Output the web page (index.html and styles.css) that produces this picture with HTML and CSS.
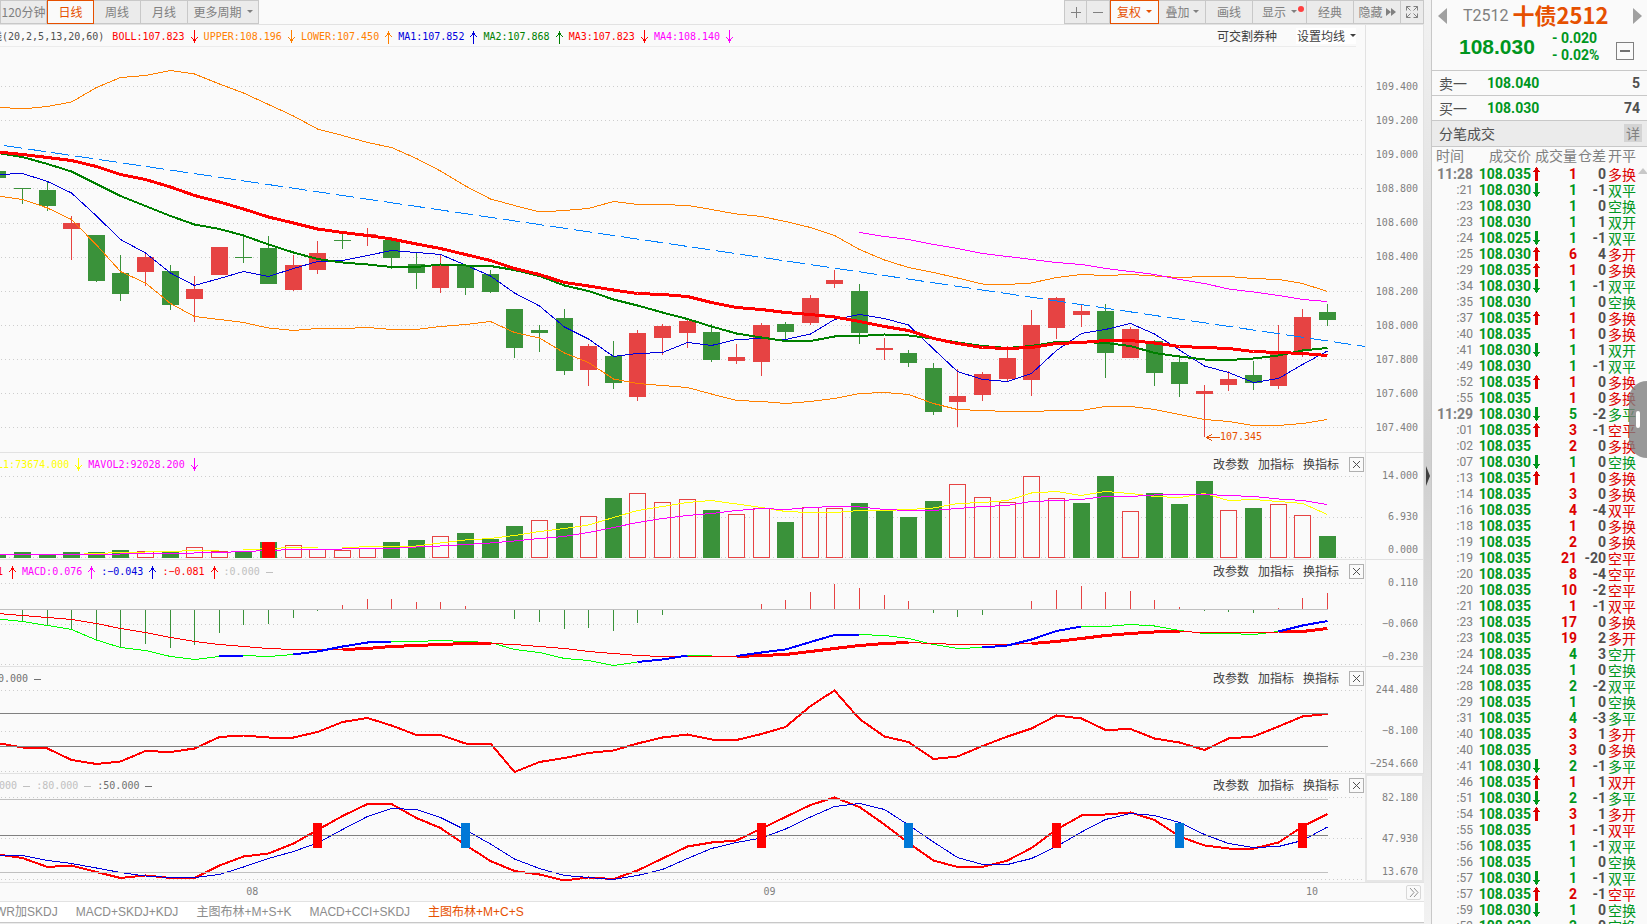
FILE: index.html
```html
<!DOCTYPE html>
<html lang="zh-CN">
<head>
<meta charset="utf-8">
<title>十债2512 日线</title>
<link rel="stylesheet" href="styles.css">
</head>
<body>
<svg class="symbols" aria-hidden="true">
  <symbol id="up" viewBox="0 0 9 14"><path d="M4 1h1v13H4zM3 3h3v2H3zM2 5h1v1H2zM6 5h1v1H6zM1 6h1v1H1zM7 6h1v1H7z" fill="currentColor"/></symbol>
  <symbol id="down" viewBox="0 0 9 14"><path d="M4 0h1v13H4zM3 9h3v2H3zM2 8h1v1H2zM6 8h1v1H6zM1 7h1v1H1zM7 7h1v1H7z" fill="currentColor"/></symbol>
  <symbol id="flat" viewBox="0 0 9 14"><path d="M1 7h7v1H1z" fill="currentColor"/></symbol>
  <symbol id="bold-up" viewBox="0 0 8 14"><path d="M2 14V5H0V4h1V3h1V1h1V0h1v1h1v2h1v1h1v1H5v9z" fill="currentColor"/></symbol>
  <symbol id="bold-down" viewBox="0 0 8 14"><path d="M2 0v9H0v1h1v1h1v2h1v1h1v-1h1v-2h1v-1h1V9H5V0z" fill="currentColor"/></symbol>
  <symbol id="close" viewBox="0 0 15 15"><rect x=".5" y=".5" width="14" height="14" rx="1" fill="none" stroke="#b0b0b0"/><path d="M4 4l7 7M11 4l-7 7" stroke="#505050" fill="none"/></symbol>
</svg>
<div class="app">
  <main class="charts">
    <nav class="toolbar">
      <div class="group">
        <button class="btn first">120分钟</button><button class="btn active period">日线</button><button class="btn period">周线</button><button class="btn period">月线</button><button class="btn more">更多周期<i class="caret"></i></button>
      </div>
      <div class="group">
        <button class="btn small" aria-label="放大"><svg width="12" height="12"><path d="M1 6.5h10M6.5 1v11" stroke="#808080"/></svg></button><button class="btn small" aria-label="缩小"><svg width="12" height="12"><path d="M1 6.5h10" stroke="#808080"/></svg></button><button class="btn active adjust">复权<i class="caret"></i></button><button class="btn tool">叠加<i class="caret"></i></button><button class="btn tool">画线</button><button class="btn show">显示<i class="caret"></i><b class="dot"></b></button><button class="btn tool">经典</button><button class="btn tool">隐藏<svg width="10" height="8"><path d="M0 0l5 4-5 4zM5 0l5 4-5 4z" fill="#808080"/></svg></button><button class="btn small" aria-label="全屏"><svg width="14" height="14" fill="none" stroke="#808080"><path d="M1.500 5.500v-4h4M1.500 1.500l4 4M8.500 1.500h4v4M12.500 1.500l-4 4M1.500 8.500v4h4M1.500 12.500l4-4M12.500 8.500v4h-4M12.500 12.500l-4-4"/></svg></button>
      </div>
    </nav>

    <section class="pane main-pane">
      <div class="plot">
        <header class="legend main-legend">
          <div class="values lead-main">
            <span class="name">线(20,2,5,13,20,60)</span>
            <span class="red">BOLL:107.823<svg><use href="#down"/></svg></span><span class="orange">UPPER:108.196<svg><use href="#down"/></svg></span><span class="orange">LOWER:107.450<svg><use href="#up"/></svg></span><span class="blue">MA1:107.852<svg><use href="#up"/></svg></span><span class="green">MA2:107.868<svg><use href="#up"/></svg></span><span class="red">MA3:107.823<svg><use href="#down"/></svg></span><span class="magenta">MA4:108.140<svg><use href="#down"/></svg></span>
          </div>
          <div class="actions"><button class="link">可交割券种</button><button class="link averages">设置均线<i class="caret"></i></button></div>
        </header>
        <svg class="canvas" id="price" viewBox="0 47 1365 405" preserveAspectRatio="none"></svg>
      </div>
      <div class="axis"><span>109.400</span><span>109.200</span><span>109.000</span><span>108.800</span><span>108.600</span><span>108.400</span><span>108.200</span><span>108.000</span><span>107.800</span><span>107.600</span><span>107.400</span></div>
    </section>

    <section class="pane sub">
      <div class="plot">
        <svg class="canvas" id="volume" viewBox="0 453 1365 106" preserveAspectRatio="none"></svg>
        <header class="legend">
          <div class="values lead-volume"><span class="yellow">MAVOL1:73674.000<svg><use href="#down"/></svg></span><span class="magenta">MAVOL2:92028.200<svg><use href="#down"/></svg></span></div>
          <div class="actions"><button class="link">改参数</button><button class="link">加指标</button><button class="link">换指标</button><button class="close" aria-label="关闭"><svg><use href="#close"/></svg></button></div>
        </header>
      </div>
      <div class="axis"><span>14.000</span><span>6.930</span><span>0.000</span></div>
    </section>

    <section class="pane sub">
      <div class="plot">
        <svg class="canvas" id="macd" viewBox="0 560 1365 106" preserveAspectRatio="none"></svg>
        <header class="legend">
          <div class="values lead-macd"><span class="red">1<svg><use href="#up"/></svg></span><span class="magenta">MACD:0.076<svg><use href="#up"/></svg></span><span class="blue">:−0.043<svg><use href="#up"/></svg></span><span class="red">:−0.081<svg><use href="#up"/></svg></span><span class="silver">:0.000<svg><use href="#flat"/></svg></span></div>
          <div class="actions"><button class="link">改参数</button><button class="link">加指标</button><button class="link">换指标</button><button class="close" aria-label="关闭"><svg><use href="#close"/></svg></button></div>
        </header>
      </div>
      <div class="axis"><span>0.110</span><span>−0.060</span><span>−0.230</span></div>
    </section>

    <section class="pane sub">
      <div class="plot">
        <svg class="canvas" id="cci" viewBox="0 667 1365 106" preserveAspectRatio="none"></svg>
        <header class="legend">
          <div class="values lead-cci"><span class="gray">0.000<svg><use href="#flat"/></svg></span></div>
          <div class="actions"><button class="link">改参数</button><button class="link">加指标</button><button class="link">换指标</button><button class="close" aria-label="关闭"><svg><use href="#close"/></svg></button></div>
        </header>
      </div>
      <div class="axis"><span>244.480</span><span>−8.100</span><span>−254.660</span></div>
    </section>

    <section class="pane sub last">
      <div class="plot">
        <svg class="canvas" id="skdj" viewBox="0 774 1365 108" preserveAspectRatio="none"></svg>
        <header class="legend">
          <div class="values lead-skdj"><span class="silver">:20.000<svg><use href="#flat"/></svg></span><span class="silver">:80.000<svg><use href="#flat"/></svg></span><span class="gray">:50.000<svg><use href="#flat"/></svg></span></div>
          <div class="actions"><button class="link">改参数</button><button class="link">加指标</button><button class="link">换指标</button><button class="close" aria-label="关闭"><svg><use href="#close"/></svg></button></div>
        </header>
      </div>
      <div class="axis selected"><span>82.180</span><span>47.930</span><span>13.670</span></div>
    </section>

    <div class="months">
      <span class="month-8">08</span><span class="month-9">09</span><span class="month-10">10</span>
      <button class="forward" aria-label="向后"><svg width="10" height="9" fill="none" stroke="#909090"><path d="M1 0l4 4.500-4 4.500M5 0l4 4.500-4 4.500"/></svg></button>
    </div>

    <nav class="templates">
      <a href="#t1">WR加SKDJ</a><a href="#t2">MACD+SKDJ+KDJ</a><a href="#t3">主图布林+M+S+K</a><a href="#t4">MACD+CCI+SKDJ</a><a href="#t5" class="current">主图布林+M+C+S</a>
    </nav>
  </main>

  <div class="splitter"><svg width="4" height="20"><path d="M0 0l4 10-4 10z" fill="#404040"/></svg></div>

  <aside class="quote">
    <header class="instrument">
      <button class="arrow" aria-label="上一个"><svg width="9" height="16"><path d="M9 0v16L0 8z" fill="#a0a0a0"/></svg></button>
      <span class="code">T2512</span><h1>十债2512</h1>
      <button class="arrow next" aria-label="下一个"><svg width="9" height="16"><path d="M0 0v16l9-8z" fill="#a0a0a0"/></svg></button>
    </header>
    <div class="last-price">
      <strong>108.030</strong>
      <div class="change"><span>- 0.020</span><span>- 0.02%</span></div>
      <button class="collapse" aria-label="收起"><svg width="10" height="2"><path d="M0 0h10v2H0z" fill="#707070"/></svg></button>
    </div>
    <div class="level"><span>卖一</span><b class="up-green">108.040</b><b class="amount">5</b></div>
    <div class="level"><span>买一</span><b class="up-green">108.030</b><b class="amount">74</b></div>
    <div class="title"><span>分笔成交</span><button class="detail">详</button></div>
    <div class="list">
      <table>
        <colgroup><col class="c-time"><col class="c-price"><col class="c-arrow"><col class="c-qty"><col class="c-diff"><col></colgroup>
        <thead><tr><th class="left">时间</th><th>成交价</th><th colspan="2">成交量</th><th>仓差</th><th class="kind">开平</th></tr></thead>
        <tbody id="trades"></tbody>
      </table>
      <svg class="scroll-up" width="9" height="6"><path d="M0 6l5-6 5 6z" fill="#c8c8c8"/></svg>
    </div>
    <button class="handle" aria-label="侧边栏"><i></i></button>
  </aside>
</div>
<script src="chart.js"></script>
</body>
</html>
```
FILE: styles.css
```css
* { box-sizing: border-box; }
body {
  margin: 0;
  background: #fafafa;
  color: #505050;
  font: 12px/16px "Noto Sans CJK SC", sans-serif;
}
button { margin: 0; padding: 0; border: 0; background: none; color: inherit; font: inherit; cursor: pointer; }
a { color: inherit; text-decoration: none; }
svg { display: block; flex: none; }
.symbols { position: absolute; width: 0; height: 0; }
.app { display: flex; height: 100vh; min-height: 640px; overflow: hidden; }
.charts { flex: 1; min-width: 0; display: flex; flex-direction: column; overflow: hidden; border-bottom: 1px solid #ececec; }

/* toolbar */
.toolbar { display: flex; justify-content: space-between; height: 25px; flex: none; border-bottom: 1px solid #e2e2e2; }
.group { display: flex; height: 24px; }
.btn {
  position: relative;
  display: flex; align-items: center; justify-content: center; gap: 5px;
  height: 24px; padding-bottom: 1px;
  border: 1px solid #c8c8c8; border-left-width: 0;
  background: #ebebeb; color: #808080;
  white-space: nowrap;
}
.group .btn:first-child { border-left-width: 1px; }
.btn.active { border: 1px solid #e65000; background: #fafafa; color: #e65000; }
.first { width: 47px; }
.period { width: 47px; }
.more { width: 71px; }
.small { width: 23px; }
.adjust { width: 49px; }
.tool { width: 47px; gap: 3px; }
.show { width: 54px; }
.caret { width: 0; height: 0; border: 3px solid transparent; border-top-color: currentColor; border-bottom-width: 0; }
.dot { position: absolute; right: 2px; top: 5px; width: 6px; height: 6px; border-radius: 3px; background: #ff4040; }

/* panes */
.pane { display: flex; border-bottom: 1px solid #e2e2e2; }
.main-pane { flex: 1; min-height: 0; }
.sub { flex: none; height: 107px; }
.last { height: 109px; }
.plot { position: relative; flex: 1; min-width: 0; display: flex; flex-direction: column; overflow: hidden; }
.canvas { width: 100%; flex: 1; min-height: 0; shape-rendering: crispEdges; }
.sub .canvas { position: absolute; left: 0; top: 0; height: 100%; }
.legend { position: relative; display: flex; justify-content: space-between; align-items: center; height: 23px; flex: none; }
.main-legend { height: 22px; border-bottom: 1px solid #ececec; margin-right: 9px; }
.values { display: flex; align-items: center; font-family: "DejaVu Sans Mono", "Noto Sans CJK SC", monospace; font-size: 10px; white-space: nowrap; }
.main-legend .values { padding-top: 2px; }
.values span { display: flex; align-items: center; }
.values svg { width: 9px; height: 14px; margin: 0 5px; shape-rendering: crispEdges; }
.values .name { font-size: 10px; margin-right: 8px; }
.lead-main { margin-left: -8px; }
.lead-volume { margin-left: -27px; }
.lead-macd { margin-left: -3px; }
.lead-cci { margin-left: -2px; }
.lead-skdj { margin-left: -25px; }
.actions { display: flex; align-items: center; gap: 9px; color: #404040; padding-right: 1px; }
.sub .link { padding-bottom: 2px; }
.sub .link:nth-last-child(2) { margin-right: 1px; }
.main-legend .actions { gap: 19px; padding: 0; }
.averages { display: flex; align-items: center; gap: 5px; background: #fff; padding: 0 0 0 1px; }
.close svg { width: 15px; height: 15px; shape-rendering: crispEdges; }
.axis {
  width: 59px; flex: none;
  display: flex; flex-direction: column; align-items: flex-end;
  padding: 17px 5px 0 0;
  border-left: 1px solid #e2e2e2; border-right: 1px solid #e2e2e2;
  color: #808080; font: 10px/12px "DejaVu Sans Mono", monospace;
}
.main-pane .axis { justify-content: space-between; padding: 56px 5px 18px 0; }
.sub .axis span:nth-child(2) { margin-top: 29px; }
.sub .axis span:nth-child(3) { margin-top: 21px; }
.sub .axis.selected { border: 2px solid #e6e6e6; padding: 16px 4px 0 0; }

.red { color: #f00; }
.orange { color: #ff8000; }
.blue { color: #00d; }
.green { color: #008000; }
.magenta { color: #f0f; }
.yellow { color: #ff0; }
.silver { color: #c0c0c0; }
.gray { color: #707070; }

/* time axis and template tabs */
.months {
  display: grid; grid-template-columns: 246fr 517fr 542fr 100fr 18px; align-items: center;
  height: 19px; flex: none; border-bottom: 1px solid #e2e2e2;
  color: #808080; font: 10px/12px "DejaVu Sans Mono", monospace;
}
.month-8 { grid-column: 2; }
.month-9 { grid-column: 3; }
.month-10 { grid-column: 4; }
.forward { grid-column: 5; width: 15px; height: 15px; display: flex; align-items: center; justify-content: center; border: 1px solid #d8d8d8; border-radius: 2px; }
.templates {
  display: flex; align-items: center; gap: 18px; height: 21px; flex: none;
  margin: 0; padding-right: 8px; background: #fff; border-bottom: 1px solid #c8c8c8;
  color: #8c8c8c; font-family: "Liberation Sans", "Noto Sans CJK SC", sans-serif; white-space: nowrap;
}
.templates a:first-child { margin-left: -5px; }
.templates .current { color: #e65000; }

/* splitter */
.splitter { width: 8px; flex: none; display: flex; align-items: center; padding: 28px 0 0 2px; background: linear-gradient(#f2f2f2, #cfcfcf 50%, #f2f2f2); border-right: 1px solid #c8c8c8; }

/* quote panel */
.quote { position: relative; width: 215px; flex: none; display: flex; flex-direction: column; overflow: hidden; }
.instrument { display: flex; align-items: center; height: 32px; padding: 0 5px 0 6px; flex: none; }
.code { margin-left: 16px; color: #808080; font: 16px/20px Roboto, sans-serif; }
h1 { margin: 0 0 0 4px; padding-bottom: 4px; color: #e65000; font-size: 22px; line-height: 28px; font-weight: 700; white-space: nowrap; }
.next { margin-left: auto; }
.last-price { display: flex; align-items: center; height: 38px; padding: 0 13px 8px 27px; flex: none; color: #00961e; }
.last-price strong { font: bold 21px/24px "Liberation Sans", sans-serif; }
.change { display: flex; flex-direction: column; margin-left: 17px; font: bold 14px/17px Roboto, sans-serif; }
.collapse { margin: 8px 0 0 auto; width: 18px; height: 18px; display: flex; align-items: center; justify-content: center; border: 1px solid #808080; }
.level { display: flex; align-items: center; height: 25px; padding: 0 7px 0 7px; flex: none; border-top: 1px solid #c8c8c8; font-size: 14px; }
.level b { font: bold 14px/16px Roboto, sans-serif; }
.up-green { margin-left: 20px; color: #00961e; }
.amount { margin-left: auto; }
.title { display: flex; align-items: center; justify-content: space-between; height: 27px; padding: 0 5px 2px 7px; flex: none; border-top: 1px solid #c8c8c8; border-bottom: 1px solid #c8c8c8; background: #ebebeb; font-size: 14px; }
.detail { width: 18px; height: 18px; line-height: 18px; background: #d4d4d4; color: #808080; font-size: 14px; }
.list { position: relative; flex: 1; min-height: 0; overflow: hidden; }
table { width: 100%; table-layout: fixed; border-collapse: collapse; }
.c-time { width: 41px; }
.c-price { width: 58px; }
.c-arrow { width: 12px; }
.c-qty { width: 34px; }
.c-diff { width: 29px; }
th, td { padding: 0; height: 16px; line-height: 16px; text-align: right; white-space: nowrap; }
th { height: 19px; padding-bottom: 3px; color: #808080; font-size: 14px; font-weight: 400; }
th.left { text-align: left; padding-left: 4px; }
td { font-family: Roboto, sans-serif; font-size: 14px; font-weight: 700; }
td:first-child { color: #808080; }
td.second { font-size: 12px; font-weight: 400; }
.price, .buy { color: #00961e; }
.sell { color: #dc0000; }
td svg { width: 8px; height: 14px; margin-left: 2px; shape-rendering: crispEdges; }
th.kind, td.kind { padding-left: 2px; text-align: left; font-family: "Noto Sans CJK SC", sans-serif; font-size: 14px; font-weight: 400; }
.scroll-up { position: absolute; right: 0; top: 21px; }
.handle { position: absolute; right: 0; top: 381px; width: 18px; height: 77px; padding-left: 7px; border-radius: 18px 0 0 18px; background: rgba(128, 128, 128, .8); }
.handle i { display: block; width: 4px; height: 17px; border-radius: 2px; background: #fff; }
```
FILE: chart.js
```
const FIRST = -1;
const cx = i => Math.floor(22.4 + 24.62 * i);
const UP = '#e64343', DOWN = '#3a923a';

const rect = (x, y, w, h, fill) => `<rect x="${x}" y="${y}" width="${w}" height="${h}" fill="${fill}"/>`;
const line = (ys, color, width = 1, from = FIRST) =>
  `<polyline points="${ys.map((y, k) => `${cx(from + k) + 0.5},${y}`).join(' ')}" fill="none" stroke="${color}" stroke-width="${width}" stroke-linejoin="round"/>`;
const part = (ys, a, b, color, width) => line(ys.slice(a - FIRST, b - FIRST + 1), color, width, a);
const level = (y, color) => rect(0, y, 1328, 1, color);
const grid = ys => ys.map(y => `<path d="M1 ${y + 0.5}H1365" stroke="#cdcdcd" stroke-dasharray="1 3"/>`).join('');
const draw = (id, parts) => { document.getElementById(id).innerHTML = parts.join(''); };

/* direction, high, body top, body bottom, low */
const candles = `g 171 171 178 178|g 188 188 189 204|g 182 190 206 211|r 216 223 229 260|g 235 235 281 282|g 255 273 294 301|r 254 257 272 286|g 265 271 305 310|r 276 289 299 322|r 247 247 275 275|g 236 257 258 263|g 236 248 284 284|r 255 265 290 291|r 241 253 270 274|g 233 240 241 249|r 228 234 236 246|g 239 240 258 269|g 252 264 273 289|r 255 265 288 293|g 265 266 288 295|g 270 274 292 293|g 309 309 348 358|g 325 330 333 352|g 309 318 371 375|r 344 346 370 386|g 341 356 383 389|r 330 333 397 401|r 324 326 338 355|r 319 321 333 348|g 324 332 360 362|r 344 357 361 364|r 323 325 362 376|g 322 324 332 340|r 295 298 323 325|r 270 280 284 288|g 284 291 333 344|r 338 348 350 360|g 350 353 363 367|g 363 368 412 415|r 369 396 402 427|r 372 374 395 401|r 346 358 379 382|r 310 325 380 396|r 297 298 328 339|r 305 311 315 327|g 304 311 353 378|r 327 329 358 358|g 340 341 373 386|g 357 362 384 397|r 385 391 394 437|r 371 379 385 391|g 361 375 383 390|r 325 354 386 389|r 309 317 351 357|g 304 312 320 326`
  .split('|').map(s => s.split(' '));

const upper = [107,109,106.5,102,87.5,77.5,75.5,70.5,74,84,93,104.5,116,129,135.5,142.5,147.5,158.5,171,186,199,205.5,212,210.5,208.5,201.5,204.5,204.5,205.5,209.5,214,216.5,221.5,227.5,235.5,249.5,260,267.5,272.5,278,284,284.5,283,277.5,274.5,275.5,274.5,276,277.5,276.5,276.5,278.5,279.5,283.5,291.5];
const lower = [196,199.5,208,219.5,245,271.5,283,303.5,316.5,319.5,322.5,328,330.5,328.5,328.5,327.5,329.5,329.5,326.5,324.5,321.5,332.5,338,353,362.5,379,383.5,385.5,387.5,394,400.5,401.5,403.5,401.5,398.5,393.5,392.5,394.5,403.5,409.5,410.5,411.5,411.5,410.5,410.5,406.5,406.5,409.5,414.5,419.5,421.5,425.5,425.5,423.5,419.5];
const ma1 = [174.5,173.5,181.5,193,216,239.5,253,273,285.5,278.5,271.5,276.5,268.5,261.5,260.5,255.5,250.5,252.5,254.5,265,276,293,306,327,339,356.5,353.5,352.5,342.5,345.5,339.5,338.5,339.5,334,319.5,314.5,318.5,325,349,371.5,379.5,381.5,373.5,350.5,333.5,329.5,323.5,334,350,366,372.5,382.5,378.5,364.5,351];
const ma2 = [153,157,164,171.5,184,196,206,216,224.5,229,235.5,244.5,252.5,259,262.5,264.5,267,267,264.5,265.5,266,270,276,285.5,291,299.5,305.5,312.5,319,326.5,333.5,337.5,341,341,336.5,336,334.5,335.5,338.5,342.5,346,348,346,342,342,343,346,353,356.5,359.5,360,358.5,355.5,350.5,348];
const ma3 = [152,154.5,157.5,160.5,166.5,174.5,179.5,187,195.5,202,209,217,223,229,232.5,235.5,239,244,248.5,254.5,260.5,268.5,274.5,282.5,286,290,293.5,294.5,296.5,302.5,307.5,309.5,312.5,314.5,317,321.5,326.5,330.5,338.5,343.5,347.5,348.5,347.5,343.5,342.5,340.5,340.5,343,346.5,347.5,348.5,351.5,352.5,353.5,355.5];
const ma4 = [232.5,236.5,239.5,244.5,248.5,253.5,256.5,259.5,262.5,264.5,268.5,271.5,274.5,279.5,283.5,289,292,295.5,299.5,301.5];

draw('price', [
  grid([86,120,154,188,223,257,291,325,359,393,427]),
  ...candles.map(([dir, high, top, bottom, low], k) => {
    const x = cx(k + FIRST), c = dir === 'r' ? UP : DOWN;
    return rect(x, high, 1, low - high, c) + rect(x - 8, top, 17, bottom - top, c);
  }),
  '<path d="M4 145.500L1365 346.500" stroke="#0080ff" stroke-dasharray="18 6"/>',
  line(upper, '#ff8000'), line(lower, '#ff8000'), line(ma1, '#0000dd'),
  line(ma2, '#008000', 2), line(ma3, '#ff0000', 3), line(ma4, '#ff00ff', 1, 34),
  '<path d="M1206 437.500h14M1206 437.500l6-3M1206 437.500l6 3" stroke="#e65000" fill="none"/>',
  '<text x="1220" y="440" font-family="DejaVu Sans Mono" font-size="10" fill="#e65000">107.345</text>'
]);

const volumes = 'g554 g552 g554 g552 g552 g550 r551 g552 r547 r551 g551 g542 r545 r549 r550 r548 g542 g540 r536 g533 g539 g526 r520 g523 r516 g498 r493 r502 r499 g510 r514 r508 g522 r507 r508 g503 g510 g517 g501 r484 r497 r502 r476 r498 g503 g476 r511 g493 g504 g481 r510 g508 r504 r515 g536'.split(' ');
const mavol1 = [554.5,554.5,554.5,554.5,553.5,552.5,552,551.5,550.5,550,550,548.5,547.5,548,548,546.5,547,546,543,540,538.5,535.5,531.5,528.5,525,517.5,510.5,506.5,502.5,500.5,504,507.5,511.5,512.5,512.5,510.5,510.5,509.5,508,503.5,502.5,500.5,493,491.5,495.5,491.5,493.5,496.5,497.5,493.5,500.5,499.5,501.5,503.5,514.5];
const mavol2 = [555,554.5,554.5,554.5,554.5,554,553.5,553.5,553,552.5,551.5,550.5,549.5,549.5,549,548.5,548.5,547,546,544.5,543,541,538.5,536.5,532.5,527.5,522.5,518.5,515.5,513.5,510.5,508.5,509.5,507.5,506.5,507,509.5,510.5,510.5,508.5,506.5,505.5,501.5,500.5,499.5,496.5,496.5,495,494.5,494.5,495.5,496.5,499,500.5,504.5];
draw('volume', [
  grid([476,517,557]),
  ...volumes.map((v, k) => {
    const x = cx(k + FIRST) - 8, y = +v.slice(1);
    return v[0] === 'g' ? rect(x, y, 17, 558 - y, DOWN)
      : `<rect x="${x + 0.5}" y="${y + 0.5}" width="16" height="${557 - y}" fill="#fafafa" stroke="${UP}"/>`;
  }),
  line(mavol1, '#ffff00'), line(mavol2, '#ff00ff'),
  rect(cx(10) - 6, 542, 13, 16, '#ff0000')
]);

const bars = [0,622,625,629,641,648,644,648,645,633,625,624,618,611,605,599,599,602,602,606,0,619,622,629,628,631,623,615,0,0,0,604,600,592,584,588,595,601,613,617,615,0,601,590,586,592,591,600,607,611,612,613,608,598,593];
const dif = [619,621.5,625.5,629.5,640,647.5,650.5,656.5,659.5,656.5,655.5,656.5,654.5,651.5,646.5,642.5,641.5,641.5,640.5,641.5,642.5,649.5,652.5,658.5,660.5,665.5,662,659.5,655.5,656,656,652.5,649.5,642,635,634.5,635.5,638.5,644.5,648.5,647.5,645.5,639.5,631,626.5,626.5,624.5,626,630.5,633.5,633.5,634.5,631.5,625.5,621];
const dea = [613.5,615.5,617.5,619.5,623.5,628.5,632.5,637.5,641.5,644.5,646.5,648.5,649.5,650,649.5,648.5,646.5,645.5,644.5,643.5,643.5,644.5,646.5,648.5,651.5,653.5,655.5,656.5,656.5,656.5,656.5,655.5,654.5,651.5,648.5,645.5,643.5,642.5,643.5,644.5,644.5,644.5,643.5,641.5,638.5,635.5,633.5,632,631.5,632.5,632.5,632.5,632,631.5,628.5];
draw('macd', [
  grid([583,624,664]), level(609, '#c0c0c0'),
  ...bars.map((y, k) => !y ? '' : y > 609 ? rect(cx(k + FIRST), 610, 1, y - 610, DOWN) : rect(cx(k + FIRST), y, 1, 609 - y, UP)),
  line(dif, '#00ff00'), line(dea, '#ff0000'),
  ...[[13,19],[29,36],[41,47],[51,53]].map(([a, b]) => part(dea, a, b, '#ff0000', 3)),
  ...[[8,9],[11,15],[25,27],[29,34],[39,43],[51,53]].map(([a, b]) => part(dif, a, b, '#0000ff', 2))
]);

const cci = [743,747.5,748.5,760,764,761.5,751,752,748.5,737,735.5,737.5,737.5,732,722,718,725.5,735,735,743.5,743.5,772,762,758,753,750.5,743.5,737.5,734.5,739.5,740,734,727,706,690.5,719,736.5,742,759,756.5,746,736.5,728.5,715.5,718.5,730,729,738.5,742.5,750,738.5,736.5,726.5,716.5,714];
draw('cci', [grid([690,731,771]), line(cci, '#ff0000', 2), level(713, '#808080'), level(746, '#808080')]);

const k = [854.5,858,867,865.5,872,878,875.5,878,878,865.5,856.5,853.5,843.5,830,816,804,804,818,828,845,861,871,874.5,880.5,877.5,879,870.5,858.5,846.5,842.5,840.5,828.5,817,805,797.5,807,824.5,843,860.5,867,867,860.5,848,829.5,815.5,814.5,812.5,820,836.5,845.5,848.5,848.5,842.5,826.5,814];
const d = [855.5,855.5,860.5,863.5,868,872.5,876,877.5,877.5,874.5,867,858.5,851.5,843,829.5,816.5,808.5,809.5,817.5,830,844,859,868.5,875.5,877.5,879.5,875.5,869.5,858.5,848.5,842.5,838,829,817,806.5,803.5,809.5,825,842,857.5,864.5,864.5,858.5,846.5,832,819.5,813.5,815.5,822.5,834.5,843.5,847.5,846.5,840.5,827];
draw('skdj', [
  grid([797,838,879]), line(k, '#ff0000', 2), line(d, '#0000dd'),
  level(799, '#c0c0c0'), level(835, '#808080'), level(872, '#c0c0c0'),
  ...[12,30,42,52].map(i => rect(cx(i) - 4, 823, 9, 25, '#ff0000')),
  ...[18,36,47].map(i => rect(cx(i) - 4, 823, 9, 25, '#0078d7'))
]);

/* time, price, tick (u/d/-), quantity, side, open-interest change, kind */
const trades = `11:28 35 u 1 r 0 多换|:21 30 d 1 g -1 双平|:23 30 - 1 g 0 空换|:23 30 - 1 g 1 双开|:24 25 d 1 g -1 双平|:25 30 u 6 r 4 多开|:29 35 u 1 r 0 多换|:34 30 d 1 g -1 双平|:35 30 - 1 g 0 空换|:37 35 u 1 r 0 多换|:40 35 - 1 r 0 多换|:41 30 d 1 g 1 双开|:49 30 - 1 g -1 双平|:52 35 u 1 r 0 多换|:55 35 - 1 r 0 多换|11:29 30 d 5 g -2 多平|:01 35 u 3 r -1 空平|:02 35 - 2 r 0 多换|:07 30 d 1 g 0 空换|:13 35 u 1 r 0 多换|:14 35 - 3 r 0 多换|:16 35 - 4 r -4 双平|:18 35 - 1 r 0 多换|:19 35 - 2 r 0 多换|:19 35 - 21 r -20 空平|:20 35 - 8 r -4 空平|:20 35 - 10 r -2 空平|:21 35 - 1 r -1 双平|:23 35 - 17 r 0 多换|:23 35 - 19 r 2 多开|:24 35 - 4 g 3 空开|:24 35 - 1 g 0 空换|:28 35 - 2 g -2 双平|:29 35 - 1 g 0 空换|:31 35 - 4 g -3 多平|:40 35 - 3 r 1 多开|:40 35 - 3 r 0 多换|:41 30 d 2 g -1 多平|:46 35 u 1 r 1 双开|:51 30 d 2 g -1 多平|:54 35 u 3 r 1 多开|:55 35 - 1 r -1 双平|:56 35 - 1 g -1 双平|:56 35 - 1 g 0 空换|:57 30 d 1 g -1 双平|:57 35 u 2 r -1 空平|:59 30 d 1 g 0 空换|:59 30 - 2 g 0 空换`;
document.getElementById('trades').innerHTML = trades.split('|').map(row => {
  const [time, price, tick, qty, side, diff, kind] = row.split(' ');
  const cls = side === 'r' ? 'sell' : 'buy';
  const arrow = tick === 'u' ? '<svg class="sell"><use href="#bold-up"/></svg>' : tick === 'd' ? '<svg class="buy"><use href="#bold-down"/></svg>' : '';
  return `<tr><td class="${time[0] === ':' ? 'second' : ''}">${time}</td><td class="price">108.0${price}</td><td>${arrow}</td><td class="${cls}">${qty}</td><td>${diff}</td><td class="kind ${cls}">${kind}</td></tr>`;
}).join('');
```
